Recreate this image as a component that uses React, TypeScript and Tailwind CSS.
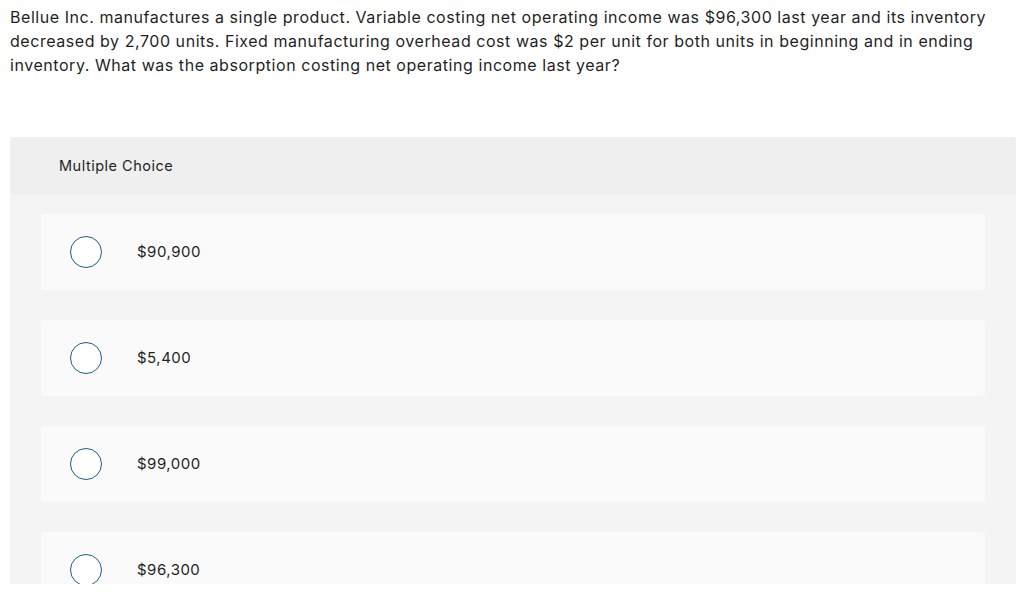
import React from "react";

const options = ["$90,900", "$5,400", "$99,000", "$96,300"];

export default function App() {
  return (
    <div
      className="w-[1024px] h-[596px] bg-white text-[#1f1f1f] overflow-hidden"
      style={{ fontFamily: "Inter, 'Noto Sans', sans-serif" }}
    >
      <div className="pl-[10px] pt-[5px] text-[16px] leading-[24px] tracking-[0.55px] whitespace-nowrap">
        <div>Bellue Inc. manufactures a single product. Variable costing net operating income was $96,300 last year and its inventory</div>
        <div>decreased by 2,700 units. Fixed manufacturing overhead cost was $2 per unit for both units in beginning and in ending</div>
        <div>inventory. What was the absorption costing net operating income last year?</div>
      </div>
      <div className="ml-[10px] mt-[60px] w-[1006px] h-[447px] overflow-hidden rounded-t-[3px] bg-[#f4f4f4]">
        <div className="h-[58px] bg-[#efefef] pl-[49px] flex items-center text-[14.5px] tracking-[0.5px]">
          Multiple Choice
        </div>
        <div className="flex flex-col gap-[30px] pt-[19px] px-[31px]">
          {options.map((o) => (
            <div
              key={o}
              className="h-[76px] shrink-0 rounded-[4px] bg-[#fafafa] flex items-center"
            >
              <div className="ml-[29px] w-[32px] h-[32px] rounded-full border-[1.5px] border-[#1d5a94] bg-white" />
              <div className="ml-[35px] text-[15px] tracking-[0.5px]">{o}</div>
            </div>
          ))}
        </div>
      </div>
    </div>
  );
}
